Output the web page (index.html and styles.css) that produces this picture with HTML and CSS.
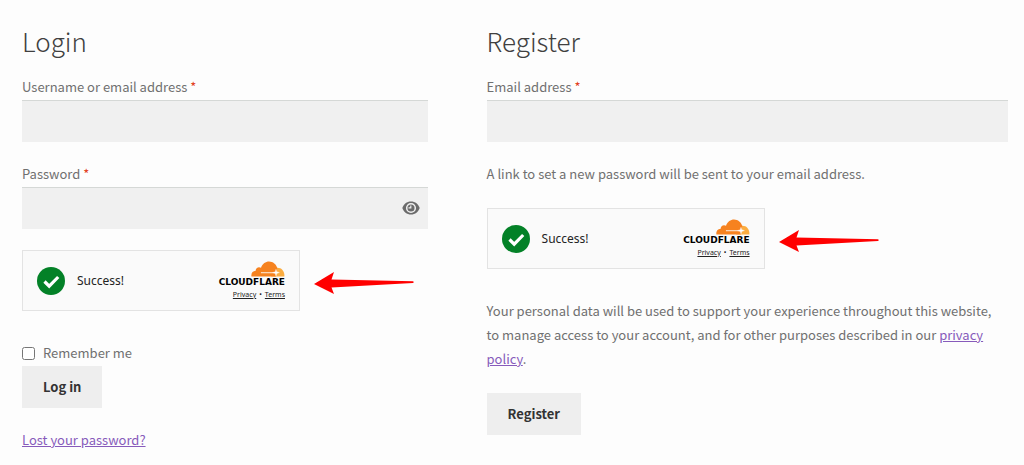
FILE: index.html
```html
<!DOCTYPE html>
<html lang="en">
<head>
  <meta charset="UTF-8" />
  <meta name="viewport" content="width=device-width, initial-scale=1" />
  <title>My account</title>
  <link rel="stylesheet" href="styles.css">
</head>
<body>

  <!-- shared shapes -->
  <svg class="symbols" aria-hidden="true">
    <symbol id="check" viewBox="0 0 28 28">
      <circle cx="14" cy="14" r="14" fill="#038127" />
      <path d="M7.5 14.5l4.7 4.7 9-9.2" fill="none" stroke="#fff" stroke-width="3.2" />
    </symbol>
    <symbol id="cloud" viewBox="0 0 34 16">
      <path d="M25 6.800C30 6 33.800 9.600 33.400 15.400H20z" fill="#fbad41" />
      <path d="M.4 15.400C0 12 1.800 10 4.700 9.800 4.500 6.900 7.500 5.300 10 6.700 11.600 2.600 14.600.4 18 .4c4 0 7.300 2.800 8.300 6.600l-1.500 8.400z" fill="#f6821f" />
      <path d="M10 11.600h13.500v.5H10zM25 8.200l.8 2.500 2.700.9-2.700.9-.8 2.500-.8-2.500-2.700-.9 2.700-.9z" fill="#fff" stroke="#fff" stroke-width=".3" />
    </symbol>
    <symbol id="arrow" viewBox="0 0 100 22">
      <path d="M0 12L20 0l-2.500 7.500L99 9.200q1.500.8 0 1.800L17.500 15.500 20 22z" fill="#f00" />
    </symbol>
  </svg>

  <main class="account">
    <form class="login">
      <h2>Login</h2>

      <div class="field">
        <label for="username">Username or email address <span class="required">*</span></label>
        <input type="text" id="username" class="text-input">
      </div>

      <div class="field">
        <label for="password">Password <span class="required">*</span></label>
        <div class="password-box">
          <input type="password" id="password" class="text-input">
          <button type="button" class="show-password" aria-label="Show password">
            <svg viewBox="0 0 18 14" width="18" height="14">
              <path d="M9 .5C4.800.5 1.500 3.200.3 7c1.200 3.800 4.500 6.500 8.700 6.500s7.500-2.700 8.700-6.500C16.500 3.200 13.200.5 9 .5z" fill="#6b6b6b" />
              <circle cx="9" cy="7" r="4.300" fill="none" stroke="#f0f0f0" stroke-width="1.500" />
              <path d="M8.800 4.500v2.300H6.500" fill="none" stroke="#f0f0f0" stroke-width="1.200" />
            </svg>
          </button>
        </div>
      </div>

      <div class="captcha-row">
        <div class="captcha">
          <svg class="check"><use href="#check" /></svg>
          <span class="status">Success!</span>
          <div class="brand">
            <svg class="cloud"><use href="#cloud" /></svg>
            <span class="brand-name">CLOUDFLARE</span>
            <div class="terms"><a href="#">Privacy</a><span>•</span><a href="#">Terms</a></div>
          </div>
        </div>
        <svg class="arrow"><use href="#arrow" /></svg>
      </div>

      <label class="remember" for="remember"><input type="checkbox" id="remember"> Remember me</label>
      <button type="button" class="button">Log in</button>
      <p class="lost"><a href="#">Lost your password?</a></p>
    </form>

    <form class="register">
      <h2>Register</h2>

      <div class="field">
        <label for="email">Email address <span class="required">*</span></label>
        <input type="email" id="email" class="text-input">
      </div>

      <p class="hint">A link to set a new password will be sent to your email address.</p>

      <div class="captcha-row">
        <div class="captcha">
          <svg class="check"><use href="#check" /></svg>
          <span class="status">Success!</span>
          <div class="brand">
            <svg class="cloud"><use href="#cloud" /></svg>
            <span class="brand-name">CLOUDFLARE</span>
            <div class="terms"><a href="#">Privacy</a><span>•</span><a href="#">Terms</a></div>
          </div>
        </div>
        <svg class="arrow"><use href="#arrow" /></svg>
      </div>

      <p class="policy">Your personal data will be used to support your experience throughout this website, to manage access to your account, and for other purposes described in our <a href="#">privacy policy</a>.</p>
      <button type="button" class="button">Register</button>
    </form>
  </main>

</body>
</html>
```
FILE: styles.css
```css
* {
  box-sizing: border-box;
}

body {
  margin: 0;
  background-color: #fdfdfd;
  color: #707070;
  font-family: "Noto Sans CJK SC", sans-serif;
  font-size: 13px;
  line-height: 24px;
}

h2 {
  margin: 0 0 14px;
  color: #404040;
  font-size: 26px;
  font-weight: 300;
  line-height: 40px;
}

p {
  margin: 0;
}

a {
  color: #875bbb;
}

.symbols {
  display: none;
}

.account {
  display: grid;
  grid-template-columns: 7fr 9fr;
  gap: 59px;
  padding: 21px 16px 12px 22px;
}

.field {
  margin-bottom: 20px;
}

.field label {
  display: block;
  margin-bottom: 1px;
}

.required {
  color: #e2401c;
}

.text-input {
  display: block;
  width: 100%;
  height: 42px;
  padding: 8px 12px;
  border: 0;
  border-top: 1px solid #d5d8d6;
  background-color: #f0f0f0;
  color: #43454b;
  font: inherit;
}

.password-box {
  position: relative;
}

.show-password {
  position: absolute;
  top: 0;
  right: 8px;
  display: flex;
  align-items: center;
  height: 42px;
  padding: 0;
  border: 0;
  background: none;
  cursor: pointer;
}

.captcha-row {
  display: flex;
  align-items: center;
  gap: 14px;
  padding-top: 1px;
  margin-bottom: 30px;
}

.captcha {
  display: flex;
  align-items: center;
  width: 278px;
  height: 61px;
  padding: 0 14px;
  border: 1px solid #e3e3e3;
  background-color: #fafafa;
  color: #232323;
  font-family: "Noto Sans", sans-serif;
}

.check {
  width: 28px;
  height: 28px;
  margin-right: 12px;
}

.status {
  font-size: 12px;
}

.brand {
  display: flex;
  flex-direction: column;
  align-items: flex-end;
  margin-left: auto;
}

.cloud {
  width: 34px;
  height: 16px;
}

.brand-name {
  color: #000;
  font-family: "DejaVu Sans", sans-serif;
  font-size: 9px;
  font-weight: bold;
  line-height: 10px;
}

.terms {
  display: flex;
  gap: 3px;
  margin-top: 2px;
  font-size: 7px;
  line-height: 12px;
}

.terms a {
  color: #232323;
}

.arrow {
  width: 100px;
  height: 22px;
  margin-top: 4px;
}

.remember {
  display: flex;
  align-items: center;
  gap: 8px;
  margin-bottom: 1px;
}

.remember input {
  width: 13px;
  height: 13px;
  margin: 0;
}

.button {
  height: 42px;
  padding: 0 21px;
  border: 0;
  background-color: #eee;
  color: #333;
  font: inherit;
  font-weight: 600;
  cursor: pointer;
}

.lost {
  margin-top: 20px;
}

.hint {
  margin-bottom: 21px;
}

.policy {
  margin-bottom: 22px;
  padding-right: 12px;
}
```
